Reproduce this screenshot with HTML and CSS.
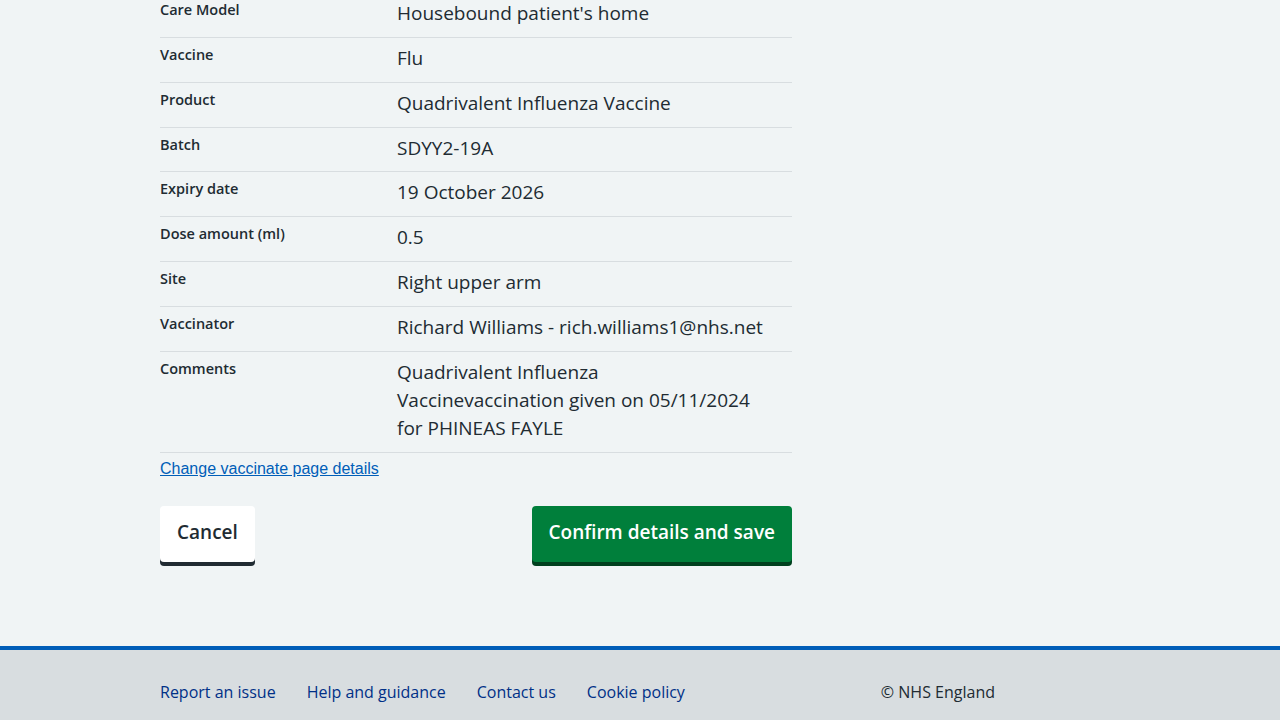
FILE: index.html
```html
<!DOCTYPE html>
<html lang="en">
<head>
<meta charset="utf-8">
<title>Check and confirm</title>
<link rel="stylesheet" href="styles.css">
</head>
<body>
<main class="page">
  <div class="container">
    <dl class="summary">
      <div class="row"><dt class="key">Care Model</dt><dd class="value">Housebound patient's home</dd></div>
      <div class="row"><dt class="key">Vaccine</dt><dd class="value">Flu</dd></div>
      <div class="row"><dt class="key">Product</dt><dd class="value">Quadrivalent Influenza Vaccine</dd></div>
      <div class="row"><dt class="key">Batch</dt><dd class="value">SDYY2-19A</dd></div>
      <div class="row"><dt class="key">Expiry date</dt><dd class="value">19 October 2026</dd></div>
      <div class="row"><dt class="key">Dose amount (ml)</dt><dd class="value">0.5</dd></div>
      <div class="row"><dt class="key">Site</dt><dd class="value">Right upper arm</dd></div>
      <div class="row"><dt class="key">Vaccinator</dt><dd class="value">Richard Williams - rich.williams1@nhs.net</dd></div>
      <div class="row"><dt class="key">Comments</dt><dd class="value">Quadrivalent Influenza Vaccinevaccination given on 05/11/2024 for PHINEAS FAYLE</dd></div>
    </dl>
    <a class="change-link" href="#">Change vaccinate page details</a>
    <div class="actions">
      <button class="btn btn-secondary" type="button">Cancel</button>
      <button class="btn btn-primary" type="button">Confirm details and save</button>
    </div>
  </div>
</main>
<footer class="footer">
  <div class="footer-inner">
    <ul class="footer-links">
      <li><a href="#">Report an issue</a></li>
      <li><a href="#">Help and guidance</a></li>
      <li><a href="#">Contact us</a></li>
      <li><a href="#">Cookie policy</a></li>
    </ul>
    <p class="copyright">© NHS England</p>
  </div>
</footer>
</body>
</html>
```

FILE: styles.css
```css
* { box-sizing: border-box; }
html, body { margin: 0; padding: 0; }
body {
  background: #f0f4f5;
  color: #212b32;
  font-family: "Open Sans", "Noto Sans", Arial, sans-serif;
}
.page { padding-bottom: 84px; }
.container {
  width: 632px;
  margin: -7px 0 0 160px;
}
.summary { margin: 0; padding: 0; }
.row {
  display: flex;
  border-bottom: 1px solid #d8dde0;
}
.key {
  width: 237px;
  flex: none;
  margin: 0;
  padding: 7px 0 8px;
  font-size: 14.5px;
  line-height: 20px;
  font-weight: 600;
}
.value {
  flex: 1;
  margin: 0;
  padding: 6px 24px 9.85px 0;
  font-size: 19px;
  line-height: 28px;
}
.change-link {
  display: inline-block;
  margin-top: 7px;
  font-family: "Liberation Sans", Arial, sans-serif;
  font-size: 16px;
  color: #005eb8;
  text-decoration: underline;
}
.actions {
  display: flex;
  justify-content: space-between;
  margin-top: 27px;
}
.btn {
  font-family: inherit;
  font-size: 19px;
  font-weight: 600;
  line-height: 30px;
  padding: 11px 17px 15px;
  border: 0;
  border-radius: 4px;
  cursor: pointer;
}
.btn-secondary {
  background: #fff;
  color: #212b32;
  box-shadow: 0 4px 0 #212b32;
}
.btn-primary {
  background: #007f3b;
  color: #fff;
  box-shadow: 0 4px 0 #00401e;
}
.footer {
  background: #d8dde0;
  border-top: 4px solid #005eb8;
  height: 200px;
}
.footer-inner {
  display: flex;
  width: 835px;
  margin-left: 160px;
  padding-top: 30px;
  font-size: 16px;
  line-height: 24px;
}
.footer-links {
  display: flex;
  gap: 31px;
  margin: 0;
  padding: 0;
  list-style: none;
  flex: 1;
}
.footer-links a { color: #003087; text-decoration: none; }
.copyright { margin: 0; color: #212b32; }
```
